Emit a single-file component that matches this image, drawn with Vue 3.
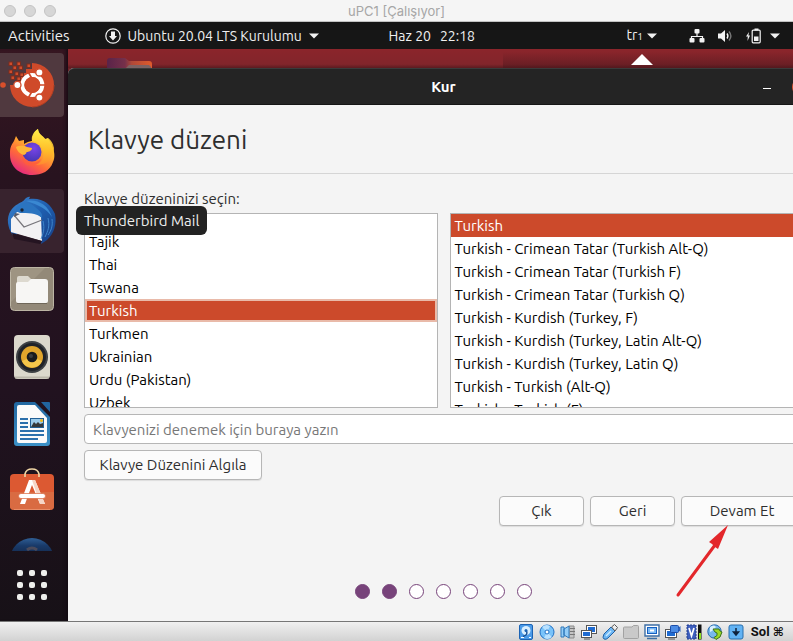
<script setup>
import { nextTick, onMounted, ref } from 'vue'

const languages = ['Taiwanese', 'Tajik', 'Thai', 'Tswana', 'Turkish', 'Turkmen', 'Ukrainian', 'Urdu (Pakistan)', 'Uzbek', 'Vietnamese', 'Wolof']
const variants = [
  'Turkish',
  'Turkish - Crimean Tatar (Turkish Alt-Q)',
  'Turkish - Crimean Tatar (Turkish F)',
  'Turkish - Crimean Tatar (Turkish Q)',
  'Turkish - Kurdish (Turkey, F)',
  'Turkish - Kurdish (Turkey, Latin Alt-Q)',
  'Turkish - Kurdish (Turkey, Latin Q)',
  'Turkish - Turkish (Alt-Q)',
  'Turkish - Turkish (F)',
  'Turkish - Turkish (Intl., with dead keys)',
]
const language = ref('Turkish')
const variant = ref('Turkish')
const sample = ref('')
const languageList = ref(null)
const steps = 7
const currentStep = 2

onMounted(async () => {
  await nextTick()
  const showRows = () => {
    if (languageList.value) languageList.value.scrollTop = 7
  }
  showRows()
  requestAnimationFrame(showRows)
})
</script>

<template>
  <div class="machine">
    <header class="host-title">
      <div class="lights"><i></i><i></i><i></i></div>
      <span class="host-name">uPC1 [Çalışıyor]</span>
    </header>

    <nav class="topbar">
      <div class="top-left">
        <button class="top-item activities" type="button">Activities</button>
        <button class="top-item app-menu" type="button">
          <svg width="16" height="16" viewBox="0 0 16 16" aria-hidden="true">
            <circle cx="8" cy="8" r="7.200" fill="none" stroke="#f2f2f2" stroke-width="1.200" />
            <path d="M6 3.500h4V8h2l-4 4.600L4 8h2z" fill="#f2f2f2" />
          </svg>
          <span>Ubuntu 20.04 LTS Kurulumu</span>
          <svg class="caret" width="10" height="6" viewBox="0 0 10 6" aria-hidden="true"><path d="M0 .5h10L5 5.500z" fill="#f2f2f2" /></svg>
        </button>
      </div>
      <button class="top-item clock" type="button"><span>Haz 20</span><span>22:18</span></button>
      <div class="top-right">
        <button class="top-item lang" type="button">
          <span>tr<small>1</small></span>
          <svg width="10" height="6" viewBox="0 0 10 6" aria-hidden="true"><path d="M0 .5h10L5 5.500z" fill="#f2f2f2" /></svg>
        </button>
        <button class="top-item system" type="button" aria-label="Sistem">
          <svg width="16" height="14" viewBox="0 0 16 14" aria-hidden="true">
            <path d="M8 3v4M2.500 10V7.500h11V10" fill="none" stroke="#f2f2f2" stroke-width="1.200" />
            <rect x="5.500" y="0" width="5" height="4.500" rx="1" fill="#f2f2f2" />
            <rect x="0.500" y="9" width="5" height="4.500" rx="1" fill="#f2f2f2" />
            <rect x="10.500" y="9" width="5" height="4.500" rx="1" fill="#f2f2f2" />
          </svg>
          <svg width="15" height="14" viewBox="0 0 15 14" aria-hidden="true">
            <path d="M0 4.500h3L7 1v12L3 9.500H0z" fill="#f2f2f2" />
            <path d="M9 4.500q1.800 2.500 0 5" fill="none" stroke="#f2f2f2" stroke-width="1.400" />
            <path d="M11 2.500q3.800 4.500 0 9" fill="none" stroke="#777" stroke-width="1.400" />
          </svg>
          <span class="power">
            <svg width="15" height="16" viewBox="0 0 15 16" aria-hidden="true">
              <path d="M3 4 0 8.500h1.800L1.500 13 4 7.500H2.400z" fill="#f2f2f2" />
              <rect x="6.200" y="2.200" width="8" height="12.600" rx="1" fill="none" stroke="#f2f2f2" stroke-width="1.200" />
              <rect x="8.500" y="0.500" width="4" height="2" fill="#f2f2f2" />
              <rect x="8" y="8.500" width="4.500" height="4.500" fill="#f2f2f2" />
            </svg>
            <svg width="10" height="6" viewBox="0 0 10 6" aria-hidden="true"><path d="M0 .5h10L5 5.500z" fill="#f2f2f2" /></svg>
          </span>
        </button>
      </div>
    </nav>

    <div class="desktop">
      <aside class="dock">
        <button class="dock-item active" type="button" aria-label="Ubuntu kurulumu">
          <svg width="64" height="64" viewBox="0 0 64 64">
            <circle cx="3" cy="32" r="2.800" fill="#d94f2b" />
            <path d="M32 10a22 22 0 1 1-22 22h5v-4h4v-4h4v-4h3v-4h6z" fill="#cf4a2a" />
            <path d="M32 54a22 22 0 0 0 22-22" fill="none" stroke="#b33f22" stroke-width="1" />
            <g fill="#d04c2b" stroke="#7c2d1f" stroke-width="1">
              <rect x="9" y="9" width="3.500" height="3.500" /><rect x="17" y="9" width="3.500" height="3.500" />
              <rect x="27" y="11" width="3.500" height="3.500" /><rect x="13" y="13" width="3.500" height="3.500" />
              <rect x="19" y="13" width="3.500" height="3.500" /><rect x="9" y="17" width="3.500" height="3.500" />
              <rect x="15" y="19" width="3.500" height="3.500" /><rect x="20" y="20" width="3.500" height="3.500" />
              <rect x="11" y="23" width="3.500" height="3.500" /><rect x="17" y="24" width="3.500" height="3.500" />
            </g>
            <circle cx="32.300" cy="32" r="10" fill="none" stroke="#fff" stroke-width="4" />
            <path d="M36 32h10M34 29l-7-12M34 35l-7 12" stroke="#cf4a2a" stroke-width="1.600" />
            <circle cx="32.300" cy="32" r="7.900" fill="#cf4a2a" />
            <g fill="#fff" stroke="#cf4a2a" stroke-width="1.300">
              <circle cx="39.400" cy="19.400" r="3.600" /><circle cx="17.400" cy="32" r="3.600" /><circle cx="39.400" cy="44.600" r="3.600" />
            </g>
          </svg>
        </button>
        <button class="dock-item" type="button" aria-label="Firefox">
          <svg width="64" height="64" viewBox="0 0 64 64">
            <defs>
              <linearGradient id="fox" x1="0.800" y1="0.050" x2="0.250" y2="1"><stop offset="0" stop-color="#fff044" /><stop offset=".35" stop-color="#ffb52e" /><stop offset=".65" stop-color="#ff6a39" /><stop offset="1" stop-color="#e42584" /></linearGradient>
              <linearGradient id="tail" x1="0.500" y1="0" x2="0.500" y2="1"><stop offset="0" stop-color="#fff04a" /><stop offset=".6" stop-color="#ffbd28" /><stop offset="1" stop-color="#ff8a30" /></linearGradient>
              <radialGradient id="globe" cx=".6" cy=".3" r=".8"><stop offset="0" stop-color="#7a45e8" /><stop offset="1" stop-color="#4034ae" /></radialGradient>
            </defs>
            <path d="M10 31c0-6 3-9 4-11l2-5 3 5 5-1v4c5-3 8-3 8-3 0-7 5-12 6-12 0 5 4 6 7 10l3-1c0 2 3 4 4 8 3 6 3 12 1 16-3 9-11 13-21 13C19 54 10 45 10 34z" fill="url(#fox)" />
            <path d="M38 8c-5 3-7 8-6 12 5 0 10 4 11 10 2 8-3 14-10 14 12 1 21-5 21-17-1-5-3-8-6-10l-2 3c-1-5-7-5-8-12z" fill="url(#tail)" opacity=".9" />
            <circle cx="32" cy="31" r="9.500" fill="url(#globe)" />
            <path d="M16 26c5-2 9-1 11 0l5 1c0 3-4 4-5 4s0 2-3 3c-4-1-7-4-8-8z" fill="#ffb638" />
            <path d="M22 36c3 7 14 8 19 2-3 9-18 10-19-2z" fill="#ff5c3c" opacity=".8" />
          </svg>
        </button>
        <button class="dock-item hovered" type="button" aria-label="Thunderbird Mail" aria-describedby="dock-tip">
          <svg width="64" height="64" viewBox="0 0 64 64">
            <defs><linearGradient id="bird" x1="0" y1="0" x2="0.900" y2="1"><stop offset="0" stop-color="#3c86d0" /><stop offset=".5" stop-color="#1f5fb0" /><stop offset="1" stop-color="#173f87" /></linearGradient></defs>
            <path d="M18 15c3-2 5-2 7-5 1-1 4-3 5-2l-1 2c13-2 22 5 26 15 2 10-1 20-8 26l-6 4 1-7-24-5-2 6c-3-2-7-7-8-15-1-9 4-16 10-19z" fill="url(#bird)" />
            <path d="M11 30 17 23l17 0 7 5 1 24-31-9z" fill="#f2f1f3" />
            <path d="m14 26 10 12 18-7" fill="none" stroke="#77757b" stroke-width="1.200" />
            <path d="M12 44 42 52l-2 3-26-5z" fill="#241421" />
            <path d="M16 19c5-6 14-7 19-1 5 4 8 6 7 11-4-4-10-5-20-5-4 0-6-2-6-5z" fill="#2b74c0" />
            <path d="M26 12c12-2 22 4 26 16-5-8-13-12-26-16z" fill="#3a88d2" />
            <path d="M43 32c2 8 0 13-2 18M48 29c2 8 0 13-3 19M52 30c1 7-1 12-4 16" fill="none" stroke="#3f86cc" stroke-width="1" />
            <circle cx="22" cy="21" r="1.700" fill="#1b2232" />
            <path d="m15 24 5 1-6 3z" fill="#555b6c" />
          </svg>
        </button>
        <button class="dock-item" type="button" aria-label="Dosyalar">
          <svg width="64" height="64" viewBox="0 0 64 64">
            <rect x="10.500" y="10.500" width="43" height="43" rx="4" fill="#938978" stroke="#bcb5a4" />
            <path d="M11 45V14q0-3 3-3h31z" fill="#aaa08c" opacity=".5" />
            <path d="M17 30V21q0-2 2-2h9l3 3v6z" fill="#ddd9cf" />
            <path d="M16 27q0-2 2-2h10l3-3h14q3 0 3 3v19q0 2-2 2H18q-2 0-2-2z" fill="#f7f6f4" />
            <path d="M17 46.500h30" stroke="#6f6759" />
          </svg>
        </button>
        <button class="dock-item" type="button" aria-label="Rhythmbox">
          <svg width="64" height="64" viewBox="0 0 64 64">
            <rect x="14" y="10" width="36" height="44" rx="4" fill="#dbd8cc" />
            <path d="M15 52.500h34" stroke="#bbb7aa" stroke-width="2" />
            <circle cx="32" cy="32" r="16" fill="#3d4144" /><circle cx="32" cy="32" r="14" fill="#202328" />
            <circle cx="32" cy="32" r="11" fill="#e0a52c" /><path d="M22 36a11 11 0 0 0 20 0l-10-4z" fill="#f4c64a" />
            <circle cx="32" cy="32" r="5.300" fill="#191b1d" /><circle cx="31" cy="31" r="2" fill="#3a3d40" />
          </svg>
        </button>
        <button class="dock-item" type="button" aria-label="LibreOffice Writer">
          <svg width="64" height="64" viewBox="0 0 64 64">
            <defs><linearGradient id="writer" x2="0" y2="1"><stop stop-color="#2167a0" /><stop offset="1" stop-color="#3b91c7" /></linearGradient></defs>
            <path d="M17 9h18l15 15v26q0 3-3 3H17q-3 0-3-3V12q0-3 3-3z" fill="url(#writer)" />
            <path d="M41 9h8q1 0 1 1v9z" fill="#21659f" />
            <path d="M19 12h16l12 13v23q0 2-2 2H19q-2 0-2-2V14q0-2 2-2z" fill="#fafafa" />
            <path d="M20 26h8M20 30h8M20 34h8M20 38h24M20 42h24M20 46h18" stroke="#2c70ac" stroke-width="2" />
            <rect x="30" y="25" width="14" height="10" fill="#225f94" /><rect x="31" y="26" width="12" height="8" fill="#9ccbea" />
            <path d="m31 34 3-5 2 2 2-2 2 2 3-1v4z" fill="#34383b" /><circle cx="41.500" cy="27.500" r="1.500" fill="#efb91a" />
          </svg>
        </button>
        <button class="dock-item" type="button" aria-label="Ubuntu Software">
          <svg width="64" height="64" viewBox="0 0 64 64">
            <rect x="10" y="13" width="44" height="36" rx="4" fill="#dc5932" />
            <path d="M10 31h44v14q0 4-4 4H14q-4 0-4-4z" fill="#d96b42" />
            <path d="M14 48.500h36" stroke="#e98d68" />
            <path d="M25 16v-3q1-5 7-5t7 5v3" fill="none" stroke="#f0d6a6" stroke-width="1.600" />
            <path d="M29 19h6l10 24h-5l-8-19-7 19h-5z" fill="#fff" />
            <path d="M32 19h3l10 24h-5z" fill="#f6d5c6" />
            <rect x="18.500" y="32.500" width="27" height="5" rx="2.500" fill="#fff" stroke="#d9663e" stroke-width=".7" />
          </svg>
        </button>
        <button class="dock-item last" type="button" aria-label="Yardım">
          <svg width="64" height="64" viewBox="0 0 64 64">
            <defs><linearGradient id="help" x2="0" y2=".5"><stop stop-color="#2f5f96" /><stop offset=".35" stop-color="#193a69" /><stop offset="1" stop-color="#12203c" /></linearGradient></defs>
            <circle cx="32" cy="31" r="22" fill="url(#help)" />
            <path d="M27 21q5-4 10 0" fill="none" stroke="#4a4a5b" stroke-width="3" />
          </svg>
        </button>
        <button class="apps" type="button" aria-label="Uygulamaları göster"><i v-for="n in 9" :key="n"></i></button>
      </aside>

      <main class="workspace">
        <div class="wallpaper">
          <svg class="folder" width="48" height="10" viewBox="0 0 48 10" aria-hidden="true">
            <defs><linearGradient id="peek"><stop stop-color="#592349" /><stop offset=".4" stop-color="#75304a" /><stop offset=".55" stop-color="#b04838" /><stop offset="1" stop-color="#e05b2c" /></linearGradient></defs>
            <path d="M1 10V3q0-3 3-3h15l4 3h20q3 0 3 3v4z" fill="url(#peek)" />
            <path d="M20 10l3-3h20l2 2v1z" fill="#7c6263" />
          </svg>
          <svg class="pointer" width="22" height="11" viewBox="0 0 22 11" aria-hidden="true"><path d="M0 11 11 0l11 11z" fill="#fff" /></svg>
        </div>
        <section class="window">
          <header class="window-bar">
            <h1>Kur</h1>
            <div class="window-controls">
              <button class="minimize" type="button" aria-label="Küçült"></button>
              <button class="close" type="button" aria-label="Kapat"></button>
            </div>
          </header>
          <h2>Klavye düzeni</h2>
          <form class="page" @submit.prevent>
            <label for="languages">Klavye düzeninizi seçin:</label>
            <div class="lists">
              <select id="languages" ref="languageList" v-model="language" class="list focused" size="8">
                <option v-for="item in languages" :key="item">{{ item }}</option>
              </select>
              <select v-model="variant" class="list" size="8" aria-label="Klavye çeşidi">
                <option v-for="item in variants" :key="item">{{ item }}</option>
              </select>
            </div>
            <input v-model="sample" class="try" type="text" placeholder="Klavyenizi denemek için buraya yazın" aria-label="Klavyenizi denemek için buraya yazın" />
            <button class="btn detect" type="button">Klavye Düzenini Algıla</button>
            <div class="actions">
              <button class="btn" type="button">Çık</button>
              <button class="btn" type="button">Geri</button>
              <div class="forward">
                <button class="btn" type="submit">Devam Et</button>
                <svg class="arrow" width="56" height="74" viewBox="0 0 56 74" aria-hidden="true">
                  <path d="M3 70 40 20" stroke="#e3272b" stroke-width="3" stroke-linecap="round" />
                  <path d="M53 0 34 17l3 2 3 3 3 2z" fill="#e3272b" />
                </svg>
              </div>
            </div>
            <div class="steps"><i v-for="n in steps" :key="n" :class="{ done: n <= currentStep }"></i></div>
          </form>
        </section>
      </main>
      <div id="dock-tip" class="tooltip" role="tooltip">Thunderbird Mail</div>
    </div>

    <footer class="status">
      <svg viewBox="0 0 16 16"><rect x="1.500" y=".5" width="13" height="15" rx="1.500" fill="#4a9ae8" stroke="#1b63b4" /><circle cx="8" cy="6.500" r="4.500" fill="#d9efff" /><path d="M8 6.500q3 4-3 6" fill="none" stroke="#174f92" stroke-width="1.500" /><circle cx="8" cy="6.500" r="1.500" fill="#1b63b4" /><path d="M3 13.500h3M11 13.500h2" stroke="#fff" /></svg>
      <svg viewBox="0 0 16 16"><circle cx="8" cy="8" r="7" fill="#79c3fa" stroke="#1f70c5" /><path d="M8 8 3 3a7 7 0 0 1 8-1zM8 8l5 5a7 7 0 0 1-8 1z" fill="#b8e1ff" /><circle cx="8" cy="8" r="2" fill="#fff" stroke="#1f70c5" /></svg>
      <svg viewBox="0 0 16 16"><path d="M9 2h5v12H9z" fill="#c5c5c5" stroke="#8a8a8a" /><path d="M10 4.500h5M10 7.500h5M10 10.500h5" stroke="#777" /><path d="M1 3h3v10H1zM4 5l5-3v12l-5-3z" fill="#94cdf7" stroke="#2f78bb" /></svg>
      <svg viewBox="0 0 16 16"><rect x="5.500" y="1.500" width="10" height="8" fill="#fff" stroke="#555" /><rect x="7" y="3" width="7" height="5" fill="#1f6bd1" /><rect x=".5" y="6.500" width="10" height="7" fill="#fff" stroke="#555" /><rect x="2" y="8" width="7" height="4" fill="#1f6bd1" /><path d="M3 15h6" stroke="#555" /></svg>
      <svg viewBox="0 0 16 16"><path d="m2 10 7-7 4 4-7 7q-2 2-4 1t0-5z" fill="#6db7f4" stroke="#2062a8" /><path d="m9.500 3 3-2.500 3 3L13 7z" fill="#eee" stroke="#555" /><path d="m4 12 5-5" stroke="#cceaff" stroke-width="1.500" /></svg>
      <svg viewBox="0 0 16 16"><path d="M.5 4q0-1 1-1H9l1.500-1.500h4q1 0 1 1v11q0 1-1 1h-13q-1 0-1-1z" fill="#c9c9c9" stroke="#a2a2a2" /></svg>
      <svg viewBox="0 0 16 16"><path d="M1 1h14v11H1zM3 14.500h10" fill="#fff" stroke="#3c6ea5" stroke-width="1.400" /><rect x="3.500" y="3.500" width="9" height="6" fill="#7bb9f5" stroke="#155fc0" /><rect x="6" y="5.500" width="4" height="2" fill="#fff" /></svg>
      <svg viewBox="0 0 16 16"><rect x=".5" y="5.500" width="11" height="8" fill="#fff" stroke="#555" /><rect x="2" y="7" width="8" height="5" fill="#1f6bd1" /><path d="M3 15h7" stroke="#555" /><rect x="5.500" y="1.500" width="8" height="7" rx="1" fill="#4a8be4" stroke="#1c4da8" /><path d="m13 4 2.500-2v6L13 6z" fill="#2a61bd" /></svg>
      <svg viewBox="0 0 16 16"><path d="M1 1h9v14H1z" fill="#3d5ebd" stroke="#213c8f" stroke-dasharray="2 1" /><path d="m3 4 2.500 8L8 4" fill="none" stroke="#fff" stroke-width="1.700" /><path d="M12 .5h3.500v15H12z" fill="#111" /><path d="M13 9h2v6h-2z" fill="#8ce01f" /></svg>
      <svg viewBox="0 0 16 16"><circle cx="7.500" cy="7.500" r="6.700" fill="#78b9ec" stroke="#2769ae" /><path d="M3 3q4-3 6 0L5 7 3 8z" fill="#d8efff" /><path d="M6 5h6l1 2 2 1-2 5-4 2.500-2-2 3-2V9L8 8z" fill="#9bd827" stroke="#3b721c" /></svg>
      <svg viewBox="0 0 16 16"><rect x="1" y="1" width="14" height="14" rx="2" fill="#62b3f4" stroke="#286fae" /><path d="M8 4v4M5.500 8 8 11l2.500-3z" fill="#10233d" stroke="#10233d" stroke-width="1.500" /></svg>
      <span>Sol <b>⌘</b></span>
    </footer>
  </div>
</template>

<style>
body {
  margin: 0;
}
</style>

<style scoped>
* {
  box-sizing: border-box;
}
.machine {
  display: flex;
  flex-direction: column;
  min-height: 100vh;
  overflow: hidden;
  background: #f4f4f4;
  font-family: Ubuntu, "Noto Sans", sans-serif;
  font-size: 15px;
  line-height: 20px;
  color: #2e2e2e;
}
button {
  margin: 0;
  padding: 0;
  border: 0;
  background: none;
  font: inherit;
  color: inherit;
}
svg {
  display: block;
  flex: none;
}
.host-title {
  display: grid;
  grid-template-columns: 1fr auto 1fr;
  align-items: center;
  height: 22px;
  border-bottom: 1px solid #c2c2c2;
  background: #f5f5f5;
  font-family: Inter, sans-serif;
  font-size: 13px;
  color: #a6a6a6;
}
.lights {
  display: flex;
  gap: 8px;
  padding-left: 4px;
}
.lights i {
  width: 12px;
  height: 12px;
  border: 1px solid #c4c4c4;
  border-radius: 50%;
  background: #d6d6d6;
}
.topbar {
  display: grid;
  grid-template-columns: 49% auto 1fr;
  align-items: center;
  height: 27px;
  background: #161616;
  font-size: 14px;
  color: #f0f0f0;
}
.top-left {
  display: flex;
  gap: 35px;
  padding-left: 8px;
}
.top-item {
  display: flex;
  align-items: center;
  white-space: nowrap;
}
.activities {
  font-size: 15px;
}
.app-menu {
  gap: 7px;
}
.clock {
  gap: 9px;
}
.top-right {
  display: flex;
  justify-content: flex-end;
  gap: 32px;
  padding-right: 13px;
}
.lang {
  gap: 4px;
}
.lang small {
  font-size: 10px;
}
.system {
  gap: 13px;
}
.power {
  display: flex;
  align-items: center;
  gap: 9px;
}
.desktop {
  position: relative;
  display: flex;
  flex: 1;
}
.dock {
  display: flex;
  flex: none;
  flex-direction: column;
  gap: 4px;
  width: 68px;
  padding-top: 4px;
  background: linear-gradient(#361621, #28131f 22%, #21121f 60%, #171117);
  box-shadow: inset -4px 0 4px -3px #100810;
}
.dock-item {
  width: 64px;
  height: 64px;
  border-radius: 0 4px 4px 0;
}
.dock-item.active {
  background: #50393f;
}
.dock-item.hovered {
  background: #38232e;
}
.dock-item.last {
  flex: none;
  height: 22px;
  overflow: hidden;
}
.apps {
  display: grid;
  grid-template-columns: repeat(3, 6px);
  gap: 6px;
  margin: 15px 17px 18px;
}
.apps i {
  width: 6px;
  height: 6px;
  border-radius: 2px;
  background: #eeeeec;
}
.workspace {
  display: flex;
  flex: 1;
  flex-direction: column;
  min-width: 0;
  overflow: hidden;
  background: #6d2027;
}
.wallpaper {
  display: flex;
  justify-content: space-between;
  align-items: flex-end;
  height: 19px;
  padding: 0 140px 0 38px;
  background:
    linear-gradient(#0000, #4c161c88) 100% 100% / 40% 16px no-repeat,
    linear-gradient(#8b252b, #82252b 80%, #5b1b20);
}
.pointer {
  margin-bottom: 3px;
}
.window {
  display: flex;
  flex: 1;
  flex-direction: column;
  width: calc(100% + 26px);
  border-radius: 6px 6px 0 0;
  background: #f4f4f4;
}
.window-bar {
  display: grid;
  grid-template-columns: 1fr auto 1fr;
  align-items: center;
  height: 37px;
  border-top: 1px solid #3a3a3a;
  border-bottom: 1px solid #161616;
  border-radius: 6px 6px 0 0;
  background: #242424;
  color: #fff;
}
h1 {
  grid-column: 2;
  margin: 0;
  font-size: 15px;
  line-height: 20px;
}
.window-controls {
  display: flex;
  justify-content: flex-end;
  align-items: center;
  gap: 21px;
  padding-right: 9px;
}
.minimize {
  width: 8px;
  height: 4px;
  border-bottom: 1px solid #fff;
}
.close {
  width: 18px;
  height: 18px;
  border-radius: 50%;
  background: #d8512f;
}
h2 {
  margin: 0;
  padding: 18px 20px 16px;
  border-bottom: 1px solid #d5d5d5;
  font-size: 26px;
  font-weight: 400;
  line-height: 34px;
}
.page {
  display: flex;
  flex-direction: column;
  padding: 15px 16px 21px;
}
.lists {
  display: grid;
  grid-template-columns: 1fr 1fr;
  gap: 12px;
  margin-top: 4px;
}
.list {
  width: 100%;
  height: 195px;
  margin: 0;
  padding: 0;
  overflow-y: auto;
  scrollbar-width: none;
  border: 1px solid #b4b4b4;
  border-radius: 0;
  outline: 0;
  background: #fff;
  font: inherit;
  color: #000;
}
.list::-webkit-scrollbar {
  display: none;
}
.list option {
  height: 23px;
  padding: 3px 4px;
  font-size: 15px;
}
.list option:checked {
  background: linear-gradient(#cc4a2b, #cc4a2b);
  -webkit-text-fill-color: #fff;
}
.list.focused option:checked {
  box-shadow: inset 0 0 0 2px #e9baa9;
}
.try {
  width: 100%;
  height: 30px;
  margin-top: 6px;
  padding: 0 8px;
  border: 1px solid #b6b6b6;
  border-radius: 4px;
  background: #fff;
  font: inherit;
  color: #2e2e2e;
}
.try::placeholder {
  color: #777;
  opacity: 1;
}
.btn {
  min-width: 85px;
  height: 30px;
  padding: 0 14px;
  border: 1px solid #b6b6b6;
  border-radius: 4px;
  background: #fbfbfb;
  box-shadow: 0 1px 1px #00000018;
}
.detect {
  align-self: flex-start;
  min-width: 178px;
  margin-top: 6px;
}
.actions {
  display: flex;
  justify-content: flex-end;
  gap: 6px;
  margin-top: 16px;
}
.forward {
  position: relative;
}
.forward .btn {
  min-width: 122px;
}
.arrow {
  position: absolute;
  top: 29px;
  left: -6px;
}
.steps {
  display: flex;
  justify-content: center;
  gap: 12px;
  margin-top: 58px;
}
.steps i {
  width: 15px;
  height: 15px;
  border: 1px solid #77437a;
  border-radius: 50%;
  background: #fff;
}
.steps .done {
  background: #77437a;
}
.tooltip {
  position: absolute;
  top: 157px;
  left: 76px;
  padding: 5px 8px 4px;
  border-radius: 6px;
  background: #222;
  color: #eee;
}
.status {
  display: flex;
  justify-content: flex-end;
  align-items: center;
  gap: 5px;
  height: 20px;
  padding-right: 9px;
  border-top: 1px solid #777;
  background: linear-gradient(#f0f0f0, #d2d2d2);
  font-family: Roboto, "Liberation Sans", sans-serif;
  font-size: 13px;
  font-weight: 700;
  color: #111;
}
.status svg {
  width: 16px;
  height: 16px;
}
.status span {
  margin-left: 2px;
}
.status b {
  font-family: "DejaVu Sans", sans-serif;
  font-size: 12px;
}
</style>
